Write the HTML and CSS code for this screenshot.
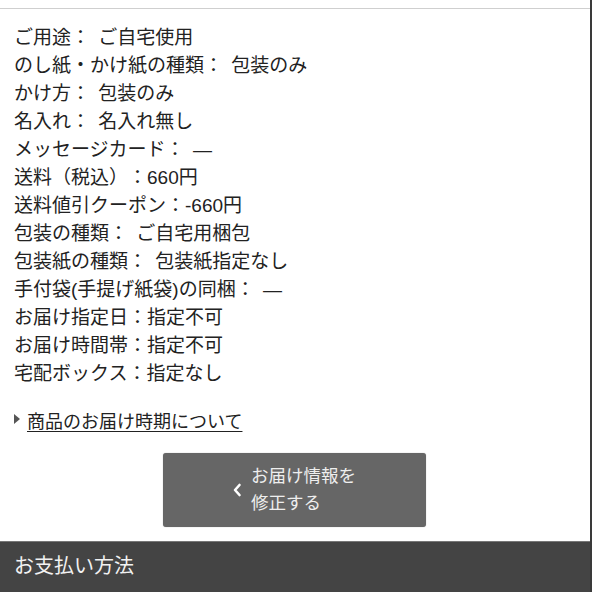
FILE: index.html
```
<!DOCTYPE html>
<html lang="ja">
<head>
<meta charset="utf-8">
<link rel="stylesheet" href="styles.css">
</head>
<body>
<div class="page">
  <div class="panel">
    <div class="info">
      <div>ご用途： ご自宅使用</div>
      <div>のし紙・かけ紙の種類： 包装のみ</div>
      <div>かけ方： 包装のみ</div>
      <div>名入れ： 名入れ無し</div>
      <div>メッセージカード： —</div>
      <div>送料（税込）：660円</div>
      <div>送料値引クーポン：-660円</div>
      <div>包装の種類： ご自宅用梱包</div>
      <div>包装紙の種類： 包装紙指定なし</div>
      <div>手付袋(手提げ紙袋)の同梱： —</div>
      <div>お届け指定日：指定不可</div>
      <div>お届け時間帯：指定不可</div>
      <div>宅配ボックス：指定なし</div>
    </div>
    <div class="link-row">
      <span class="tri"></span>
      <a class="link" href="#">商品のお届け時期について</a>
    </div>
    <div class="btn-wrap">
      <a class="btn" href="#">
        <svg class="chev" width="10" height="14" viewBox="0 0 10 14"><path d="M7.5 2 L3 7 L7.5 12" fill="none" stroke="#fff" stroke-width="2.6" stroke-linecap="round" stroke-linejoin="round"/></svg>
        <span class="btn-text">お届け情報を<br>修正する</span>
      </a>
    </div>
  </div>
  <div class="bar">お支払い方法</div>
</div>
</body>
</html>
```
FILE: styles.css
```
html, body {
  margin: 0;
  padding: 0;
  background: #fff;
}
body {
  font-family: "Liberation Sans", "Noto Sans CJK JP", sans-serif;
  color: #222;
  text-spacing-trim: space-all;
}
.page {
  height: 592px;
  box-sizing: border-box;
  padding-top: 8px;
  border-right: 2px solid #3a3a3a;
  overflow: hidden;
}
.panel {
  border-top: 1px solid #cfcfcf;
  padding: 15px 14px 0;
}
.info {
  font-size: 19px;
  line-height: 28px;
  word-spacing: 3px;
}
.link-row {
  margin-top: 18px;
  height: 28px;
  display: flex;
  align-items: center;
  font-size: 18px;
}
.tri {
  width: 0;
  height: 0;
  border-top: 5px solid transparent;
  border-bottom: 5px solid transparent;
  border-left: 6px solid #555;
  margin-right: 7px;
  margin-top: -2px;
}
.link {
  color: #222;
  text-decoration: underline;
  text-underline-offset: 3px;
}
.btn-wrap {
  margin-top: 19px;
  display: flex;
  justify-content: center;
  padding-right: 2px;
}
.btn {
  width: 263px;
  height: 74px;
  box-sizing: border-box;
  background: #666;
  border-radius: 3px;
  box-shadow: 0 0 1px #999;
  display: flex;
  align-items: center;
  justify-content: center;
  text-decoration: none;
  color: #eee;
}
.chev {
  margin-right: 9px;
}
.btn-text {
  font-size: 17.5px;
  line-height: 27px;
  text-align: left;
}
.bar {
  margin-top: 14px;
  height: 51px;
  box-sizing: border-box;
  background: #444;
  border-top: 1px solid #777;
  color: #f2f2f2;
  font-size: 20px;
  padding: 0 0 5px 14px;
  display: flex;
  align-items: center;
}
```
